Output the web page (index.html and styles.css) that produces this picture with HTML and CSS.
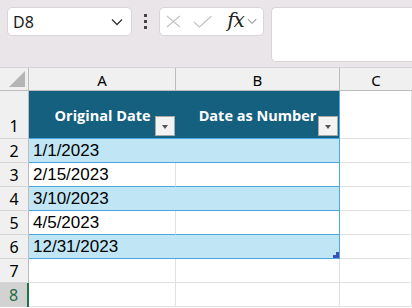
FILE: index.html
```html
<!DOCTYPE html>
<html lang="en">
<head>
  <meta charset="UTF-8" />
  <title>Sheet</title>
  <link rel="stylesheet" href="styles.css">
</head>
<body>
  <!-- Barra da fórmula -->
  <div class="toolbar">
    <div class="name-box">
      <span>D8</span>
      <svg class="chev" width="12" height="8" viewBox="0 0 12 8"><path d="M1 1.5 L6 6.5 L11 1.5" fill="none" stroke="#333" stroke-width="1.3"/></svg>
    </div>
    <div class="dots"><i></i><i></i><i></i></div>
    <div class="fx-box">
      <svg width="16" height="13" viewBox="0 0 16 13"><path d="M1 0.5 L15 12.5 M15 0.5 L1 12.5" stroke="#c4c4c4" stroke-width="1.3" fill="none"/></svg>
      <svg class="ok" width="21" height="13" viewBox="0 0 21 13"><path d="M1 7 L7 12.5 L20 0.5" stroke="#c4c4c4" stroke-width="1.3" fill="none"/></svg>
      <span class="fx">fx</span>
      <svg width="11" height="7" viewBox="0 0 11 7"><path d="M1 1 L5.5 5.5 L10 1" fill="none" stroke="#999" stroke-width="1.1"/></svg>
    </div>
    <div class="formula"></div>
  </div>

  <!-- Grade da planilha -->
  <div class="sheet">
    <div class="corner"><span></span></div>
    <div class="col-head">A</div>
    <div class="col-head">B</div>
    <div class="col-head last">C</div>

    <div class="row-head tall">1</div>
    <div class="th">Original Date<button class="filter"></button></div>
    <div class="th edge">Date as Number<button class="filter"></button></div>
    <div class="cell"></div>

    <div class="row-head">2</div>
    <div class="td band">1/1/2023</div>
    <div class="td band edge"></div>
    <div class="cell"></div>

    <div class="row-head">3</div>
    <div class="td split">2/15/2023</div>
    <div class="td edge"></div>
    <div class="cell"></div>

    <div class="row-head">4</div>
    <div class="td band">3/10/2023</div>
    <div class="td band edge"></div>
    <div class="cell"></div>

    <div class="row-head">5</div>
    <div class="td split">4/5/2023</div>
    <div class="td edge"></div>
    <div class="cell"></div>

    <div class="row-head">6</div>
    <div class="td band">12/31/2023</div>
    <div class="td band edge end"><span class="handle"></span></div>
    <div class="cell"></div>

    <div class="row-head">7</div>
    <div class="cell"></div>
    <div class="cell"></div>
    <div class="cell"></div>

    <div class="row-head active">8</div>
    <div class="cell"></div>
    <div class="cell"></div>
    <div class="cell"></div>
  </div>
</body>
</html>
```

FILE: styles.css
```css
body {
  margin: 0;
  width: 412px;
  height: 308px;
  overflow: hidden;
  background: #fff;
  font-family: "Liberation Sans", Arial, sans-serif;
}

/* Barra de cima */
.toolbar {
  height: 68px;
  background: #e9e5e9;
  border-bottom: 1px solid #d6d2d6;
  display: flex;
  align-items: flex-start;
  padding: 7px 0 0 7px;
  box-sizing: border-box;
}

.name-box {
  width: 125px;
  height: 29px;
  box-sizing: border-box;
  background: #fff;
  border: 1px solid #d8d4d8;
  border-radius: 5px;
  display: flex;
  align-items: center;
  justify-content: space-between;
  padding: 0 8px 0 5px;
  font-family: "Noto Sans", sans-serif;
  font-size: 16px;
  color: #1a1a1a;
}

.dots {
  width: 27px;
  height: 29px;
  display: flex;
  flex-direction: column;
  align-items: center;
  justify-content: center;
  gap: 3px;
}
.dots i {
  width: 3px;
  height: 3px;
  background: #444;
}

.fx-box {
  width: 105px;
  height: 29px;
  box-sizing: border-box;
  background: #fff;
  border: 1px solid #d8d4d8;
  border-radius: 5px;
  display: flex;
  align-items: center;
  padding: 0 6px 0 6px;
}
.fx-box .ok {
  margin-left: 12px;
}
.fx {
  font-family: "DejaVu Serif", "Liberation Serif", serif;
  font-style: italic;
  font-size: 20px;
  color: #222;
  margin: 0 3px 3px 15px;
  letter-spacing: -1px;
}

.formula {
  flex: 1;
  height: 53px;
  margin-left: 7px;
  background: #fff;
  border: 1px solid #d8d4d8;
  border-right: none;
  border-radius: 5px 0 0 5px;
}

/* Grade */
.sheet {
  display: grid;
  grid-template-columns: 29px 147px 164px 1fr;
  grid-template-rows: 23px 48px repeat(7, 24px);
  font-size: 17px;
  color: #000;
}

.corner {
  background: #f0f0f0;
  border-right: 1px solid #bcbcbc;
  border-bottom: 1px solid #bcbcbc;
  position: relative;
}
.corner span {
  position: absolute;
  right: 3px;
  bottom: 3px;
  width: 0;
  height: 0;
  border-left: 16px solid transparent;
  border-bottom: 16px solid #b5b5b5;
}

.col-head {
  background: #f0f0f0;
  border-right: 1px solid #bcbcbc;
  border-bottom: 1px solid #bcbcbc;
  display: flex;
  align-items: center;
  justify-content: center;
  font-family: "Noto Sans", sans-serif;
  font-size: 15px;
  padding-top: 2px;
  box-sizing: border-box;
}
.col-head.last {
  border-right: none;
}

.row-head {
  background: #f0f0f0;
  border-right: 1px solid #bcbcbc;
  border-bottom: 1px solid #d6d6d6;
  display: flex;
  align-items: center;
  justify-content: center;
  font-family: "Noto Sans", sans-serif;
  font-size: 16px;
}
.row-head.tall {
  align-items: flex-end;
  padding-bottom: 1px;
}
.row-head.active {
  background: #d2d2d2;
  color: #1f6b45;
  border-right: 2px solid #217346;
  border-bottom: none;
}

.cell {
  border-right: 1px solid #e1e1e1;
  border-bottom: 1px solid #e1e1e1;
}

/* Tabela */
.th {
  background: #155f7f;
  color: #fff;
  font-family: "Open Sans", sans-serif;
  font-weight: bold;
  font-size: 14.5px;
  display: flex;
  align-items: center;
  justify-content: center;
  position: relative;
  border-bottom: 1px solid #4aa8e0;
  padding-top: 2px;
  box-sizing: border-box;
}

.filter {
  position: absolute;
  right: 1px;
  bottom: 2px;
  width: 20px;
  height: 20px;
  padding: 0;
  background: #f3f3f3;
  border: 1px solid #a9a9a9;
}
.filter::after {
  content: "";
  position: absolute;
  left: 6px;
  top: 8px;
  border-left: 3.5px solid transparent;
  border-right: 3.5px solid transparent;
  border-top: 4px solid #555;
}

.td {
  border-bottom: 1px solid #4aa8e0;
  display: flex;
  align-items: center;
  padding-left: 4px;
  box-sizing: border-box;
  position: relative;
}
.td.band {
  background: #c0e6f5;
}
.td.split {
  border-right: 1px solid #e1e1e1;
}
.edge {
  border-right: 1px solid #4aa8e0;
}

.handle {
  position: absolute;
  right: 0;
  bottom: 0;
  width: 6px;
  height: 6px;
  background: #3f51b5;
  clip-path: polygon(50% 0, 100% 0, 100% 100%, 0 100%, 0 50%, 50% 50%);
}
```
